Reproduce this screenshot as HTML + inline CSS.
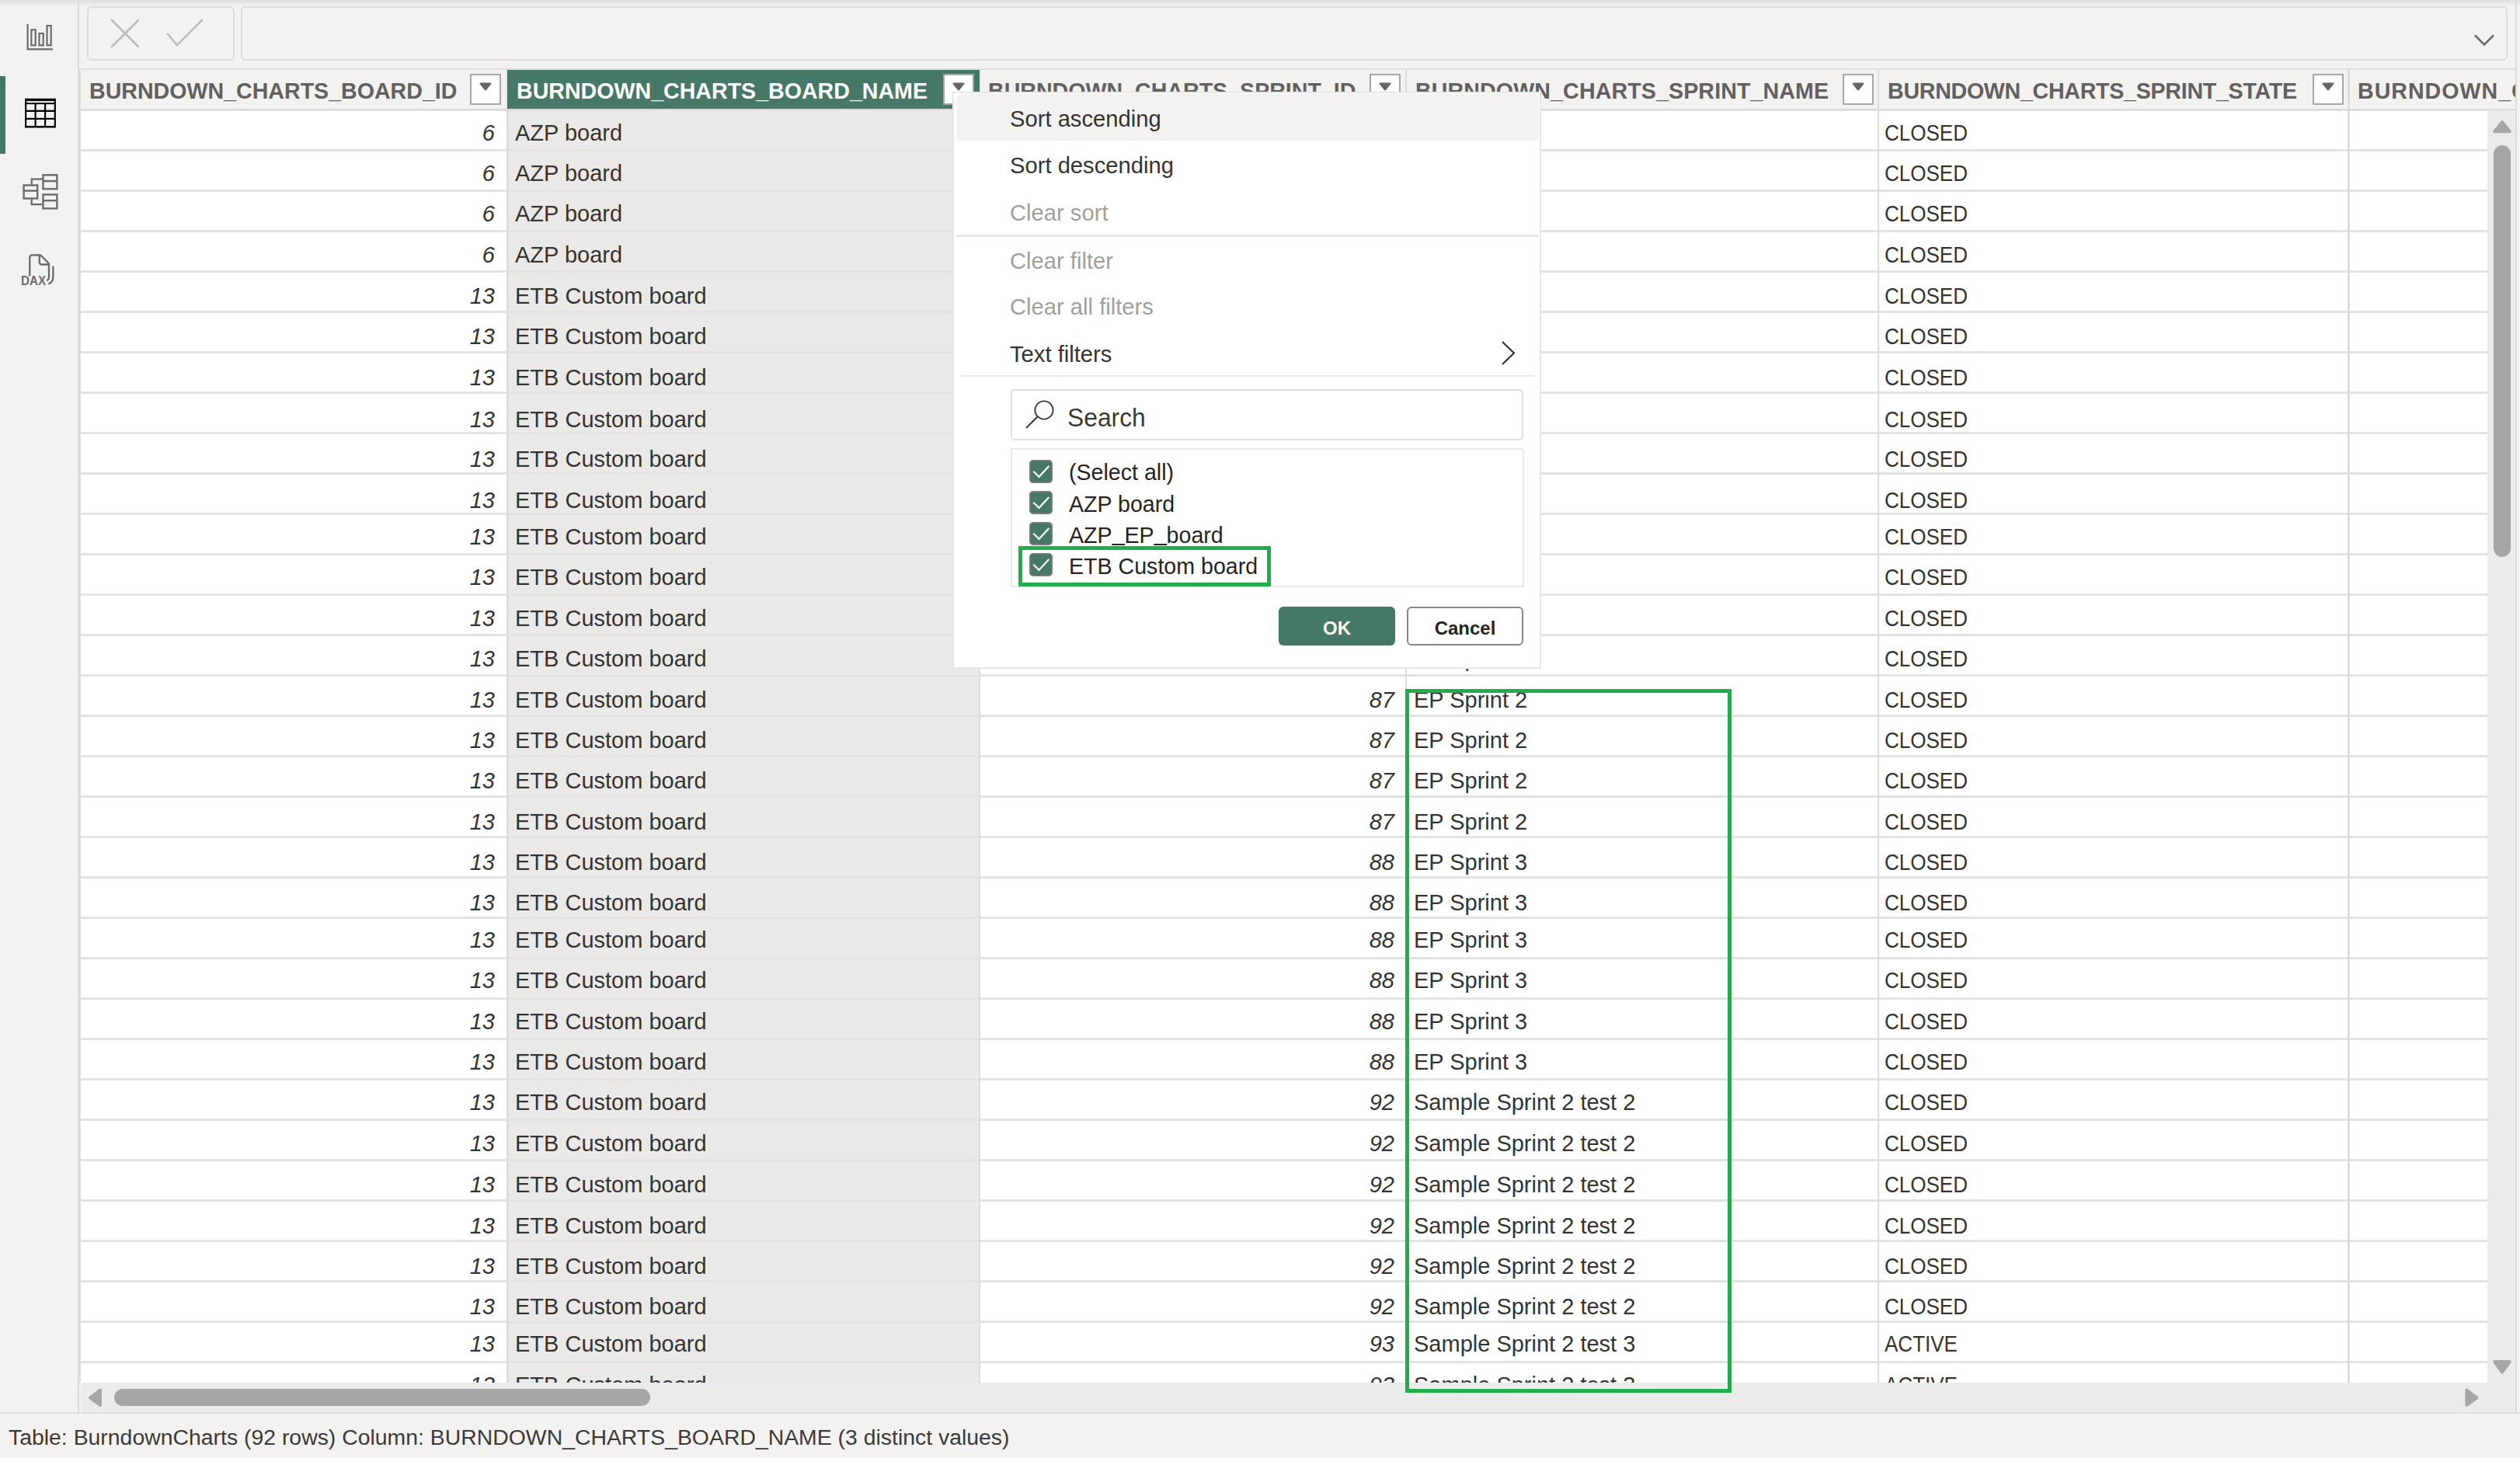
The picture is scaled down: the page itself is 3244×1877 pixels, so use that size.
<!DOCTYPE html><html><head><meta charset="utf-8"><style>
html,body{margin:0;padding:0;}
body{width:3244px;height:1877px;position:relative;overflow:hidden;background:#f3f2f1;font-family:"Liberation Sans",sans-serif;}
.t{position:absolute;white-space:pre;}
svg{position:absolute;overflow:visible;}
</style></head><body>
<div style="position:absolute;left:0px;top:0px;width:3244px;height:8px;background:linear-gradient(#dedcdb,#f3f2f1);"></div>
<div style="position:absolute;left:100px;top:0px;width:2px;height:1819px;background:#dcdad8;"></div>
<div style="position:absolute;left:0px;top:98px;width:7px;height:100px;background:#467867;"></div>
<svg style="left:0;top:0" width="100" height="400">
<g fill="none" stroke="#6b6b6b" stroke-width="2.2">
<path d="M35.6 31 V63.3 H68"/>
<rect x="40.3" y="38.3" width="5.4" height="20"/>
<rect x="50.5" y="43.1" width="5.2" height="15.2"/>
<rect x="60.5" y="33.1" width="5.2" height="25.2"/>
</g>
<rect x="32" y="126.8" width="39.9" height="37.7" fill="#000"/>
<rect x="34.2" y="130.2" width="35.5" height="2" fill="#fff"/>
<g fill="#f3f2f1">
<rect x="34.2" y="134.2" width="10.3" height="7.5"/><rect x="46.7" y="134.2" width="10.3" height="7.5"/><rect x="59.2" y="134.2" width="10.5" height="7.5"/>
<rect x="34.2" y="144" width="10.3" height="7.8"/><rect x="46.7" y="144" width="10.3" height="7.8"/><rect x="59.2" y="144" width="10.5" height="7.8"/>
<rect x="34.2" y="154" width="10.3" height="8"/><rect x="46.7" y="154" width="10.3" height="8"/><rect x="59.2" y="154" width="10.5" height="8"/>
</g>
<g fill="none" stroke="#6b6b6b" stroke-width="2.4">
<rect x="30.6" y="238.5" width="17.6" height="17"/>
<path d="M30.6 245.6 H48.2"/>
<rect x="55.5" y="225.3" width="17.9" height="17.9"/>
<path d="M55.5 233.1 H73.4"/>
<rect x="55.5" y="250.5" width="17.9" height="17.9"/>
<path d="M55.5 258.2 H73.4"/>
<path d="M40.7 237.3 V230.6 H54.3 M40.7 256.7 V263.1 H54.3"/>
</g>
<g fill="none" stroke="#6b6b6b" stroke-width="2.3" stroke-linecap="butt">
<path d="M38.3 355.5 V331.5 Q38.3 328.4 41.5 328.4 H52.1 L63 339.3 V356.5 Q63 360 60.1 361.2"/>
<path d="M50.8 328.4 V337.5 Q50.8 340.5 53.8 340.5 H62.5"/>
<path d="M68.4 342.6 V356.5 Q68.4 363.5 62.4 365.6"/>
</g>
<text x="27.1" y="366.7" font-family="Liberation Sans" font-weight="bold" font-size="17" fill="#6b6b6b" textLength="32" lengthAdjust="spacingAndGlyphs">DAX</text>
</svg>
<div style="position:absolute;left:112px;top:8px;width:190px;height:70px;box-sizing:border-box;border:2px solid #dedcda;border-radius:6px;"></div>
<div style="position:absolute;left:310px;top:8px;width:2918px;height:70px;box-sizing:border-box;border:2px solid #dedcda;border-radius:6px;"></div>
<svg style="left:0;top:0" width="3244" height="90">
<g fill="none" stroke="#bbbbbb" stroke-width="2.6" stroke-linecap="round">
<path d="M144 26 L178 60 M178 26 L144 60"/>
<path d="M216 44 L228 58 L260 26"/>
</g>
<path d="M3186 45.5 L3198 57.5 L3210 45.5" fill="none" stroke="#6b6b6b" stroke-width="2.6"/>
</svg>
<div style="position:absolute;left:102px;top:88px;width:3136px;height:2px;background:#e1dfdd;"></div>
<div style="position:absolute;left:104px;top:142px;width:3098px;height:1638px;background:#fff;"></div>
<div style="position:absolute;left:654px;top:142px;width:606px;height:1638px;background:#ebe9e7;"></div>
<div style="position:absolute;left:104px;top:140px;width:3098px;height:3px;background:#e5e3e1;"></div>
<div style="position:absolute;left:104px;top:192px;width:3098px;height:3px;background:#e5e3e1;"></div>
<div style="position:absolute;left:104px;top:244px;width:3098px;height:3px;background:#e5e3e1;"></div>
<div style="position:absolute;left:104px;top:296px;width:3098px;height:3px;background:#e5e3e1;"></div>
<div style="position:absolute;left:104px;top:348px;width:3098px;height:3px;background:#e5e3e1;"></div>
<div style="position:absolute;left:104px;top:400px;width:3098px;height:3px;background:#e5e3e1;"></div>
<div style="position:absolute;left:104px;top:452px;width:3098px;height:3px;background:#e5e3e1;"></div>
<div style="position:absolute;left:104px;top:504px;width:3098px;height:3px;background:#e5e3e1;"></div>
<div style="position:absolute;left:104px;top:556px;width:3098px;height:3px;background:#e5e3e1;"></div>
<div style="position:absolute;left:104px;top:608px;width:3098px;height:3px;background:#e5e3e1;"></div>
<div style="position:absolute;left:104px;top:660px;width:3098px;height:3px;background:#e5e3e1;"></div>
<div style="position:absolute;left:104px;top:712px;width:3098px;height:3px;background:#e5e3e1;"></div>
<div style="position:absolute;left:104px;top:764px;width:3098px;height:3px;background:#e5e3e1;"></div>
<div style="position:absolute;left:104px;top:816px;width:3098px;height:3px;background:#e5e3e1;"></div>
<div style="position:absolute;left:104px;top:868px;width:3098px;height:3px;background:#e5e3e1;"></div>
<div style="position:absolute;left:104px;top:920px;width:3098px;height:3px;background:#e5e3e1;"></div>
<div style="position:absolute;left:104px;top:972px;width:3098px;height:3px;background:#e5e3e1;"></div>
<div style="position:absolute;left:104px;top:1024px;width:3098px;height:3px;background:#e5e3e1;"></div>
<div style="position:absolute;left:104px;top:1076px;width:3098px;height:3px;background:#e5e3e1;"></div>
<div style="position:absolute;left:104px;top:1128px;width:3098px;height:3px;background:#e5e3e1;"></div>
<div style="position:absolute;left:104px;top:1180px;width:3098px;height:3px;background:#e5e3e1;"></div>
<div style="position:absolute;left:104px;top:1232px;width:3098px;height:3px;background:#e5e3e1;"></div>
<div style="position:absolute;left:104px;top:1284px;width:3098px;height:3px;background:#e5e3e1;"></div>
<div style="position:absolute;left:104px;top:1336px;width:3098px;height:3px;background:#e5e3e1;"></div>
<div style="position:absolute;left:104px;top:1388px;width:3098px;height:3px;background:#e5e3e1;"></div>
<div style="position:absolute;left:104px;top:1440px;width:3098px;height:3px;background:#e5e3e1;"></div>
<div style="position:absolute;left:104px;top:1492px;width:3098px;height:3px;background:#e5e3e1;"></div>
<div style="position:absolute;left:104px;top:1544px;width:3098px;height:3px;background:#e5e3e1;"></div>
<div style="position:absolute;left:104px;top:1596px;width:3098px;height:3px;background:#e5e3e1;"></div>
<div style="position:absolute;left:104px;top:1648px;width:3098px;height:3px;background:#e5e3e1;"></div>
<div style="position:absolute;left:104px;top:1700px;width:3098px;height:3px;background:#e5e3e1;"></div>
<div style="position:absolute;left:104px;top:1752px;width:3098px;height:3px;background:#e5e3e1;"></div>
<div style="position:absolute;left:652px;top:89px;width:3px;height:1691px;background:#dfdddb;"></div>
<div style="position:absolute;left:1260px;top:89px;width:2px;height:1691px;background:#dfdddb;"></div>
<div style="position:absolute;left:1809px;top:89px;width:2px;height:1691px;background:#dfdddb;"></div>
<div style="position:absolute;left:2417px;top:89px;width:2px;height:1691px;background:#dfdddb;"></div>
<div style="position:absolute;left:3022px;top:89px;width:3px;height:1691px;background:#dfdddb;"></div>
<div style="position:absolute;left:102px;top:89px;width:2px;height:1691px;background:#e1dfdd;"></div>
<div style="position:absolute;left:653px;top:90px;width:608px;height:52px;background:#467867;"></div>
<div class="t" style="left:115px;top:101px;font-size:28.6px;line-height:32px;color:#626060;font-weight:bold;font-style:normal;">BURNDOWN_CHARTS_BOARD_ID</div>
<div class="t" style="left:665px;top:101px;font-size:28.6px;line-height:32px;color:#ffffff;font-weight:bold;font-style:normal;">BURNDOWN_CHARTS_BOARD_NAME</div>
<div class="t" style="left:1272px;top:101px;font-size:28.6px;line-height:32px;color:#626060;font-weight:bold;font-style:normal;">BURNDOWN_CHARTS_SPRINT_ID</div>
<div class="t" style="left:1822px;top:101px;font-size:28.6px;line-height:32px;color:#626060;font-weight:bold;font-style:normal;letter-spacing:0.12px;">BURNDOWN_CHARTS_SPRINT_NAME</div>
<div class="t" style="left:2430px;top:101px;font-size:28.6px;line-height:32px;color:#626060;font-weight:bold;font-style:normal;letter-spacing:-0.27px;">BURNDOWN_CHARTS_SPRINT_STATE</div>
<div class="t" style="left:3035px;top:101px;font-size:28.6px;line-height:32px;color:#626060;font-weight:bold;font-style:normal;letter-spacing:1px;">BURNDOWN_CHARTS_SPRINT_ID</div>
<div style="position:absolute;left:605px;top:95px;width:40px;height:40px;box-sizing:border-box;background:#fff;border:2px solid #a6a6a6;"></div>
<svg style="left:605px;top:95px" width="40" height="40"><path d="M12.5 13 Q12 11.5 14 11.5 H26 Q28 11.5 27.5 13 L21 21 Q20 22 19 21 Z" fill="#666"/></svg>
<div style="position:absolute;left:1214px;top:95px;width:40px;height:40px;box-sizing:border-box;background:#fff;border:2px solid #a6a6a6;"></div>
<svg style="left:1214px;top:95px" width="40" height="40"><path d="M12.5 13 Q12 11.5 14 11.5 H26 Q28 11.5 27.5 13 L21 21 Q20 22 19 21 Z" fill="#666"/></svg>
<div style="position:absolute;left:1763px;top:95px;width:40px;height:40px;box-sizing:border-box;background:#fff;border:2px solid #a6a6a6;"></div>
<svg style="left:1763px;top:95px" width="40" height="40"><path d="M12.5 13 Q12 11.5 14 11.5 H26 Q28 11.5 27.5 13 L21 21 Q20 22 19 21 Z" fill="#666"/></svg>
<div style="position:absolute;left:2372px;top:95px;width:40px;height:40px;box-sizing:border-box;background:#fff;border:2px solid #a6a6a6;"></div>
<svg style="left:2372px;top:95px" width="40" height="40"><path d="M12.5 13 Q12 11.5 14 11.5 H26 Q28 11.5 27.5 13 L21 21 Q20 22 19 21 Z" fill="#666"/></svg>
<div style="position:absolute;left:2977px;top:95px;width:40px;height:40px;box-sizing:border-box;background:#fff;border:2px solid #a6a6a6;"></div>
<svg style="left:2977px;top:95px" width="40" height="40"><path d="M12.5 13 Q12 11.5 14 11.5 H26 Q28 11.5 27.5 13 L21 21 Q20 22 19 21 Z" fill="#666"/></svg>
<div style="position:absolute;left:0;top:0;width:3202px;height:1780px;overflow:hidden;">
<div class="t" style="right:2565px;text-align:right;top:155px;font-size:29px;line-height:32px;color:#343332;font-weight:normal;font-style:italic;">6</div>
<div class="t" style="left:663px;top:155px;font-size:29px;line-height:32px;color:#343332;font-weight:normal;font-style:normal;">AZP board</div>
<div class="t" style="left:2426px;top:155px;font-size:29px;line-height:32px;color:#343332;font-weight:normal;font-style:normal;transform:scaleX(0.897);transform-origin:0 0;">CLOSED</div>
<div class="t" style="right:2565px;text-align:right;top:207px;font-size:29px;line-height:32px;color:#343332;font-weight:normal;font-style:italic;">6</div>
<div class="t" style="left:663px;top:207px;font-size:29px;line-height:32px;color:#343332;font-weight:normal;font-style:normal;">AZP board</div>
<div class="t" style="left:2426px;top:207px;font-size:29px;line-height:32px;color:#343332;font-weight:normal;font-style:normal;transform:scaleX(0.897);transform-origin:0 0;">CLOSED</div>
<div class="t" style="right:2565px;text-align:right;top:259px;font-size:29px;line-height:32px;color:#343332;font-weight:normal;font-style:italic;">6</div>
<div class="t" style="left:663px;top:259px;font-size:29px;line-height:32px;color:#343332;font-weight:normal;font-style:normal;">AZP board</div>
<div class="t" style="left:2426px;top:259px;font-size:29px;line-height:32px;color:#343332;font-weight:normal;font-style:normal;transform:scaleX(0.897);transform-origin:0 0;">CLOSED</div>
<div class="t" style="right:2565px;text-align:right;top:312px;font-size:29px;line-height:32px;color:#343332;font-weight:normal;font-style:italic;">6</div>
<div class="t" style="left:663px;top:312px;font-size:29px;line-height:32px;color:#343332;font-weight:normal;font-style:normal;">AZP board</div>
<div class="t" style="left:2426px;top:312px;font-size:29px;line-height:32px;color:#343332;font-weight:normal;font-style:normal;transform:scaleX(0.897);transform-origin:0 0;">CLOSED</div>
<div class="t" style="right:2565px;text-align:right;top:365px;font-size:29px;line-height:32px;color:#343332;font-weight:normal;font-style:italic;">13</div>
<div class="t" style="left:663px;top:365px;font-size:29px;line-height:32px;color:#343332;font-weight:normal;font-style:normal;">ETB Custom board</div>
<div class="t" style="right:1407px;text-align:right;top:365px;font-size:29px;line-height:32px;color:#343332;font-weight:normal;font-style:italic;">87</div>
<div class="t" style="left:1820px;top:365px;font-size:29px;line-height:32px;color:#343332;font-weight:normal;font-style:normal;">EP Sprint 2</div>
<div class="t" style="left:2426px;top:365px;font-size:29px;line-height:32px;color:#343332;font-weight:normal;font-style:normal;transform:scaleX(0.897);transform-origin:0 0;">CLOSED</div>
<div class="t" style="right:2565px;text-align:right;top:417px;font-size:29px;line-height:32px;color:#343332;font-weight:normal;font-style:italic;">13</div>
<div class="t" style="left:663px;top:417px;font-size:29px;line-height:32px;color:#343332;font-weight:normal;font-style:normal;">ETB Custom board</div>
<div class="t" style="right:1407px;text-align:right;top:417px;font-size:29px;line-height:32px;color:#343332;font-weight:normal;font-style:italic;">87</div>
<div class="t" style="left:1820px;top:417px;font-size:29px;line-height:32px;color:#343332;font-weight:normal;font-style:normal;">EP Sprint 2</div>
<div class="t" style="left:2426px;top:417px;font-size:29px;line-height:32px;color:#343332;font-weight:normal;font-style:normal;transform:scaleX(0.897);transform-origin:0 0;">CLOSED</div>
<div class="t" style="right:2565px;text-align:right;top:470px;font-size:29px;line-height:32px;color:#343332;font-weight:normal;font-style:italic;">13</div>
<div class="t" style="left:663px;top:470px;font-size:29px;line-height:32px;color:#343332;font-weight:normal;font-style:normal;">ETB Custom board</div>
<div class="t" style="right:1407px;text-align:right;top:470px;font-size:29px;line-height:32px;color:#343332;font-weight:normal;font-style:italic;">87</div>
<div class="t" style="left:1820px;top:470px;font-size:29px;line-height:32px;color:#343332;font-weight:normal;font-style:normal;">EP Sprint 2</div>
<div class="t" style="left:2426px;top:470px;font-size:29px;line-height:32px;color:#343332;font-weight:normal;font-style:normal;transform:scaleX(0.897);transform-origin:0 0;">CLOSED</div>
<div class="t" style="right:2565px;text-align:right;top:524px;font-size:29px;line-height:32px;color:#343332;font-weight:normal;font-style:italic;">13</div>
<div class="t" style="left:663px;top:524px;font-size:29px;line-height:32px;color:#343332;font-weight:normal;font-style:normal;">ETB Custom board</div>
<div class="t" style="right:1407px;text-align:right;top:524px;font-size:29px;line-height:32px;color:#343332;font-weight:normal;font-style:italic;">87</div>
<div class="t" style="left:1820px;top:524px;font-size:29px;line-height:32px;color:#343332;font-weight:normal;font-style:normal;">EP Sprint 2</div>
<div class="t" style="left:2426px;top:524px;font-size:29px;line-height:32px;color:#343332;font-weight:normal;font-style:normal;transform:scaleX(0.897);transform-origin:0 0;">CLOSED</div>
<div class="t" style="right:2565px;text-align:right;top:575px;font-size:29px;line-height:32px;color:#343332;font-weight:normal;font-style:italic;">13</div>
<div class="t" style="left:663px;top:575px;font-size:29px;line-height:32px;color:#343332;font-weight:normal;font-style:normal;">ETB Custom board</div>
<div class="t" style="right:1407px;text-align:right;top:575px;font-size:29px;line-height:32px;color:#343332;font-weight:normal;font-style:italic;">87</div>
<div class="t" style="left:1820px;top:575px;font-size:29px;line-height:32px;color:#343332;font-weight:normal;font-style:normal;">EP Sprint 2</div>
<div class="t" style="left:2426px;top:575px;font-size:29px;line-height:32px;color:#343332;font-weight:normal;font-style:normal;transform:scaleX(0.897);transform-origin:0 0;">CLOSED</div>
<div class="t" style="right:2565px;text-align:right;top:628px;font-size:29px;line-height:32px;color:#343332;font-weight:normal;font-style:italic;">13</div>
<div class="t" style="left:663px;top:628px;font-size:29px;line-height:32px;color:#343332;font-weight:normal;font-style:normal;">ETB Custom board</div>
<div class="t" style="right:1407px;text-align:right;top:628px;font-size:29px;line-height:32px;color:#343332;font-weight:normal;font-style:italic;">87</div>
<div class="t" style="left:1820px;top:628px;font-size:29px;line-height:32px;color:#343332;font-weight:normal;font-style:normal;">EP Sprint 2</div>
<div class="t" style="left:2426px;top:628px;font-size:29px;line-height:32px;color:#343332;font-weight:normal;font-style:normal;transform:scaleX(0.897);transform-origin:0 0;">CLOSED</div>
<div class="t" style="right:2565px;text-align:right;top:675px;font-size:29px;line-height:32px;color:#343332;font-weight:normal;font-style:italic;">13</div>
<div class="t" style="left:663px;top:675px;font-size:29px;line-height:32px;color:#343332;font-weight:normal;font-style:normal;">ETB Custom board</div>
<div class="t" style="right:1407px;text-align:right;top:675px;font-size:29px;line-height:32px;color:#343332;font-weight:normal;font-style:italic;">87</div>
<div class="t" style="left:1820px;top:675px;font-size:29px;line-height:32px;color:#343332;font-weight:normal;font-style:normal;">EP Sprint 2</div>
<div class="t" style="left:2426px;top:675px;font-size:29px;line-height:32px;color:#343332;font-weight:normal;font-style:normal;transform:scaleX(0.897);transform-origin:0 0;">CLOSED</div>
<div class="t" style="right:2565px;text-align:right;top:727px;font-size:29px;line-height:32px;color:#343332;font-weight:normal;font-style:italic;">13</div>
<div class="t" style="left:663px;top:727px;font-size:29px;line-height:32px;color:#343332;font-weight:normal;font-style:normal;">ETB Custom board</div>
<div class="t" style="right:1407px;text-align:right;top:727px;font-size:29px;line-height:32px;color:#343332;font-weight:normal;font-style:italic;">87</div>
<div class="t" style="left:1820px;top:727px;font-size:29px;line-height:32px;color:#343332;font-weight:normal;font-style:normal;">EP Sprint 2</div>
<div class="t" style="left:2426px;top:727px;font-size:29px;line-height:32px;color:#343332;font-weight:normal;font-style:normal;transform:scaleX(0.897);transform-origin:0 0;">CLOSED</div>
<div class="t" style="right:2565px;text-align:right;top:780px;font-size:29px;line-height:32px;color:#343332;font-weight:normal;font-style:italic;">13</div>
<div class="t" style="left:663px;top:780px;font-size:29px;line-height:32px;color:#343332;font-weight:normal;font-style:normal;">ETB Custom board</div>
<div class="t" style="right:1407px;text-align:right;top:780px;font-size:29px;line-height:32px;color:#343332;font-weight:normal;font-style:italic;">87</div>
<div class="t" style="left:1820px;top:780px;font-size:29px;line-height:32px;color:#343332;font-weight:normal;font-style:normal;">EP Sprint 2</div>
<div class="t" style="left:2426px;top:780px;font-size:29px;line-height:32px;color:#343332;font-weight:normal;font-style:normal;transform:scaleX(0.897);transform-origin:0 0;">CLOSED</div>
<div class="t" style="right:2565px;text-align:right;top:832px;font-size:29px;line-height:32px;color:#343332;font-weight:normal;font-style:italic;">13</div>
<div class="t" style="left:663px;top:832px;font-size:29px;line-height:32px;color:#343332;font-weight:normal;font-style:normal;">ETB Custom board</div>
<div class="t" style="right:1407px;text-align:right;top:832px;font-size:29px;line-height:32px;color:#343332;font-weight:normal;font-style:italic;">87</div>
<div class="t" style="left:1820px;top:832px;font-size:29px;line-height:32px;color:#343332;font-weight:normal;font-style:normal;">EP Sprint 2</div>
<div class="t" style="left:2426px;top:832px;font-size:29px;line-height:32px;color:#343332;font-weight:normal;font-style:normal;transform:scaleX(0.897);transform-origin:0 0;">CLOSED</div>
<div class="t" style="right:2565px;text-align:right;top:885px;font-size:29px;line-height:32px;color:#343332;font-weight:normal;font-style:italic;">13</div>
<div class="t" style="left:663px;top:885px;font-size:29px;line-height:32px;color:#343332;font-weight:normal;font-style:normal;">ETB Custom board</div>
<div class="t" style="right:1407px;text-align:right;top:885px;font-size:29px;line-height:32px;color:#343332;font-weight:normal;font-style:italic;">87</div>
<div class="t" style="left:1820px;top:885px;font-size:29px;line-height:32px;color:#343332;font-weight:normal;font-style:normal;">EP Sprint 2</div>
<div class="t" style="left:2426px;top:885px;font-size:29px;line-height:32px;color:#343332;font-weight:normal;font-style:normal;transform:scaleX(0.897);transform-origin:0 0;">CLOSED</div>
<div class="t" style="right:2565px;text-align:right;top:937px;font-size:29px;line-height:32px;color:#343332;font-weight:normal;font-style:italic;">13</div>
<div class="t" style="left:663px;top:937px;font-size:29px;line-height:32px;color:#343332;font-weight:normal;font-style:normal;">ETB Custom board</div>
<div class="t" style="right:1407px;text-align:right;top:937px;font-size:29px;line-height:32px;color:#343332;font-weight:normal;font-style:italic;">87</div>
<div class="t" style="left:1820px;top:937px;font-size:29px;line-height:32px;color:#343332;font-weight:normal;font-style:normal;">EP Sprint 2</div>
<div class="t" style="left:2426px;top:937px;font-size:29px;line-height:32px;color:#343332;font-weight:normal;font-style:normal;transform:scaleX(0.897);transform-origin:0 0;">CLOSED</div>
<div class="t" style="right:2565px;text-align:right;top:989px;font-size:29px;line-height:32px;color:#343332;font-weight:normal;font-style:italic;">13</div>
<div class="t" style="left:663px;top:989px;font-size:29px;line-height:32px;color:#343332;font-weight:normal;font-style:normal;">ETB Custom board</div>
<div class="t" style="right:1407px;text-align:right;top:989px;font-size:29px;line-height:32px;color:#343332;font-weight:normal;font-style:italic;">87</div>
<div class="t" style="left:1820px;top:989px;font-size:29px;line-height:32px;color:#343332;font-weight:normal;font-style:normal;">EP Sprint 2</div>
<div class="t" style="left:2426px;top:989px;font-size:29px;line-height:32px;color:#343332;font-weight:normal;font-style:normal;transform:scaleX(0.897);transform-origin:0 0;">CLOSED</div>
<div class="t" style="right:2565px;text-align:right;top:1042px;font-size:29px;line-height:32px;color:#343332;font-weight:normal;font-style:italic;">13</div>
<div class="t" style="left:663px;top:1042px;font-size:29px;line-height:32px;color:#343332;font-weight:normal;font-style:normal;">ETB Custom board</div>
<div class="t" style="right:1407px;text-align:right;top:1042px;font-size:29px;line-height:32px;color:#343332;font-weight:normal;font-style:italic;">87</div>
<div class="t" style="left:1820px;top:1042px;font-size:29px;line-height:32px;color:#343332;font-weight:normal;font-style:normal;">EP Sprint 2</div>
<div class="t" style="left:2426px;top:1042px;font-size:29px;line-height:32px;color:#343332;font-weight:normal;font-style:normal;transform:scaleX(0.897);transform-origin:0 0;">CLOSED</div>
<div class="t" style="right:2565px;text-align:right;top:1094px;font-size:29px;line-height:32px;color:#343332;font-weight:normal;font-style:italic;">13</div>
<div class="t" style="left:663px;top:1094px;font-size:29px;line-height:32px;color:#343332;font-weight:normal;font-style:normal;">ETB Custom board</div>
<div class="t" style="right:1407px;text-align:right;top:1094px;font-size:29px;line-height:32px;color:#343332;font-weight:normal;font-style:italic;">88</div>
<div class="t" style="left:1820px;top:1094px;font-size:29px;line-height:32px;color:#343332;font-weight:normal;font-style:normal;">EP Sprint 3</div>
<div class="t" style="left:2426px;top:1094px;font-size:29px;line-height:32px;color:#343332;font-weight:normal;font-style:normal;transform:scaleX(0.897);transform-origin:0 0;">CLOSED</div>
<div class="t" style="right:2565px;text-align:right;top:1146px;font-size:29px;line-height:32px;color:#343332;font-weight:normal;font-style:italic;">13</div>
<div class="t" style="left:663px;top:1146px;font-size:29px;line-height:32px;color:#343332;font-weight:normal;font-style:normal;">ETB Custom board</div>
<div class="t" style="right:1407px;text-align:right;top:1146px;font-size:29px;line-height:32px;color:#343332;font-weight:normal;font-style:italic;">88</div>
<div class="t" style="left:1820px;top:1146px;font-size:29px;line-height:32px;color:#343332;font-weight:normal;font-style:normal;">EP Sprint 3</div>
<div class="t" style="left:2426px;top:1146px;font-size:29px;line-height:32px;color:#343332;font-weight:normal;font-style:normal;transform:scaleX(0.897);transform-origin:0 0;">CLOSED</div>
<div class="t" style="right:2565px;text-align:right;top:1194px;font-size:29px;line-height:32px;color:#343332;font-weight:normal;font-style:italic;">13</div>
<div class="t" style="left:663px;top:1194px;font-size:29px;line-height:32px;color:#343332;font-weight:normal;font-style:normal;">ETB Custom board</div>
<div class="t" style="right:1407px;text-align:right;top:1194px;font-size:29px;line-height:32px;color:#343332;font-weight:normal;font-style:italic;">88</div>
<div class="t" style="left:1820px;top:1194px;font-size:29px;line-height:32px;color:#343332;font-weight:normal;font-style:normal;">EP Sprint 3</div>
<div class="t" style="left:2426px;top:1194px;font-size:29px;line-height:32px;color:#343332;font-weight:normal;font-style:normal;transform:scaleX(0.897);transform-origin:0 0;">CLOSED</div>
<div class="t" style="right:2565px;text-align:right;top:1246px;font-size:29px;line-height:32px;color:#343332;font-weight:normal;font-style:italic;">13</div>
<div class="t" style="left:663px;top:1246px;font-size:29px;line-height:32px;color:#343332;font-weight:normal;font-style:normal;">ETB Custom board</div>
<div class="t" style="right:1407px;text-align:right;top:1246px;font-size:29px;line-height:32px;color:#343332;font-weight:normal;font-style:italic;">88</div>
<div class="t" style="left:1820px;top:1246px;font-size:29px;line-height:32px;color:#343332;font-weight:normal;font-style:normal;">EP Sprint 3</div>
<div class="t" style="left:2426px;top:1246px;font-size:29px;line-height:32px;color:#343332;font-weight:normal;font-style:normal;transform:scaleX(0.897);transform-origin:0 0;">CLOSED</div>
<div class="t" style="right:2565px;text-align:right;top:1299px;font-size:29px;line-height:32px;color:#343332;font-weight:normal;font-style:italic;">13</div>
<div class="t" style="left:663px;top:1299px;font-size:29px;line-height:32px;color:#343332;font-weight:normal;font-style:normal;">ETB Custom board</div>
<div class="t" style="right:1407px;text-align:right;top:1299px;font-size:29px;line-height:32px;color:#343332;font-weight:normal;font-style:italic;">88</div>
<div class="t" style="left:1820px;top:1299px;font-size:29px;line-height:32px;color:#343332;font-weight:normal;font-style:normal;">EP Sprint 3</div>
<div class="t" style="left:2426px;top:1299px;font-size:29px;line-height:32px;color:#343332;font-weight:normal;font-style:normal;transform:scaleX(0.897);transform-origin:0 0;">CLOSED</div>
<div class="t" style="right:2565px;text-align:right;top:1351px;font-size:29px;line-height:32px;color:#343332;font-weight:normal;font-style:italic;">13</div>
<div class="t" style="left:663px;top:1351px;font-size:29px;line-height:32px;color:#343332;font-weight:normal;font-style:normal;">ETB Custom board</div>
<div class="t" style="right:1407px;text-align:right;top:1351px;font-size:29px;line-height:32px;color:#343332;font-weight:normal;font-style:italic;">88</div>
<div class="t" style="left:1820px;top:1351px;font-size:29px;line-height:32px;color:#343332;font-weight:normal;font-style:normal;">EP Sprint 3</div>
<div class="t" style="left:2426px;top:1351px;font-size:29px;line-height:32px;color:#343332;font-weight:normal;font-style:normal;transform:scaleX(0.897);transform-origin:0 0;">CLOSED</div>
<div class="t" style="right:2565px;text-align:right;top:1403px;font-size:29px;line-height:32px;color:#343332;font-weight:normal;font-style:italic;">13</div>
<div class="t" style="left:663px;top:1403px;font-size:29px;line-height:32px;color:#343332;font-weight:normal;font-style:normal;">ETB Custom board</div>
<div class="t" style="right:1407px;text-align:right;top:1403px;font-size:29px;line-height:32px;color:#343332;font-weight:normal;font-style:italic;">92</div>
<div class="t" style="left:1820px;top:1403px;font-size:29px;line-height:32px;color:#343332;font-weight:normal;font-style:normal;">Sample Sprint 2 test 2</div>
<div class="t" style="left:2426px;top:1403px;font-size:29px;line-height:32px;color:#343332;font-weight:normal;font-style:normal;transform:scaleX(0.897);transform-origin:0 0;">CLOSED</div>
<div class="t" style="right:2565px;text-align:right;top:1456px;font-size:29px;line-height:32px;color:#343332;font-weight:normal;font-style:italic;">13</div>
<div class="t" style="left:663px;top:1456px;font-size:29px;line-height:32px;color:#343332;font-weight:normal;font-style:normal;">ETB Custom board</div>
<div class="t" style="right:1407px;text-align:right;top:1456px;font-size:29px;line-height:32px;color:#343332;font-weight:normal;font-style:italic;">92</div>
<div class="t" style="left:1820px;top:1456px;font-size:29px;line-height:32px;color:#343332;font-weight:normal;font-style:normal;">Sample Sprint 2 test 2</div>
<div class="t" style="left:2426px;top:1456px;font-size:29px;line-height:32px;color:#343332;font-weight:normal;font-style:normal;transform:scaleX(0.897);transform-origin:0 0;">CLOSED</div>
<div class="t" style="right:2565px;text-align:right;top:1509px;font-size:29px;line-height:32px;color:#343332;font-weight:normal;font-style:italic;">13</div>
<div class="t" style="left:663px;top:1509px;font-size:29px;line-height:32px;color:#343332;font-weight:normal;font-style:normal;">ETB Custom board</div>
<div class="t" style="right:1407px;text-align:right;top:1509px;font-size:29px;line-height:32px;color:#343332;font-weight:normal;font-style:italic;">92</div>
<div class="t" style="left:1820px;top:1509px;font-size:29px;line-height:32px;color:#343332;font-weight:normal;font-style:normal;">Sample Sprint 2 test 2</div>
<div class="t" style="left:2426px;top:1509px;font-size:29px;line-height:32px;color:#343332;font-weight:normal;font-style:normal;transform:scaleX(0.897);transform-origin:0 0;">CLOSED</div>
<div class="t" style="right:2565px;text-align:right;top:1562px;font-size:29px;line-height:32px;color:#343332;font-weight:normal;font-style:italic;">13</div>
<div class="t" style="left:663px;top:1562px;font-size:29px;line-height:32px;color:#343332;font-weight:normal;font-style:normal;">ETB Custom board</div>
<div class="t" style="right:1407px;text-align:right;top:1562px;font-size:29px;line-height:32px;color:#343332;font-weight:normal;font-style:italic;">92</div>
<div class="t" style="left:1820px;top:1562px;font-size:29px;line-height:32px;color:#343332;font-weight:normal;font-style:normal;">Sample Sprint 2 test 2</div>
<div class="t" style="left:2426px;top:1562px;font-size:29px;line-height:32px;color:#343332;font-weight:normal;font-style:normal;transform:scaleX(0.897);transform-origin:0 0;">CLOSED</div>
<div class="t" style="right:2565px;text-align:right;top:1614px;font-size:29px;line-height:32px;color:#343332;font-weight:normal;font-style:italic;">13</div>
<div class="t" style="left:663px;top:1614px;font-size:29px;line-height:32px;color:#343332;font-weight:normal;font-style:normal;">ETB Custom board</div>
<div class="t" style="right:1407px;text-align:right;top:1614px;font-size:29px;line-height:32px;color:#343332;font-weight:normal;font-style:italic;">92</div>
<div class="t" style="left:1820px;top:1614px;font-size:29px;line-height:32px;color:#343332;font-weight:normal;font-style:normal;">Sample Sprint 2 test 2</div>
<div class="t" style="left:2426px;top:1614px;font-size:29px;line-height:32px;color:#343332;font-weight:normal;font-style:normal;transform:scaleX(0.897);transform-origin:0 0;">CLOSED</div>
<div class="t" style="right:2565px;text-align:right;top:1666px;font-size:29px;line-height:32px;color:#343332;font-weight:normal;font-style:italic;">13</div>
<div class="t" style="left:663px;top:1666px;font-size:29px;line-height:32px;color:#343332;font-weight:normal;font-style:normal;">ETB Custom board</div>
<div class="t" style="right:1407px;text-align:right;top:1666px;font-size:29px;line-height:32px;color:#343332;font-weight:normal;font-style:italic;">92</div>
<div class="t" style="left:1820px;top:1666px;font-size:29px;line-height:32px;color:#343332;font-weight:normal;font-style:normal;">Sample Sprint 2 test 2</div>
<div class="t" style="left:2426px;top:1666px;font-size:29px;line-height:32px;color:#343332;font-weight:normal;font-style:normal;transform:scaleX(0.897);transform-origin:0 0;">CLOSED</div>
<div class="t" style="right:2565px;text-align:right;top:1714px;font-size:29px;line-height:32px;color:#343332;font-weight:normal;font-style:italic;">13</div>
<div class="t" style="left:663px;top:1714px;font-size:29px;line-height:32px;color:#343332;font-weight:normal;font-style:normal;">ETB Custom board</div>
<div class="t" style="right:1407px;text-align:right;top:1714px;font-size:29px;line-height:32px;color:#343332;font-weight:normal;font-style:italic;">93</div>
<div class="t" style="left:1820px;top:1714px;font-size:29px;line-height:32px;color:#343332;font-weight:normal;font-style:normal;">Sample Sprint 2 test 3</div>
<div class="t" style="left:2426px;top:1714px;font-size:29px;line-height:32px;color:#343332;font-weight:normal;font-style:normal;transform:scaleX(0.897);transform-origin:0 0;">ACTIVE</div>
<div class="t" style="right:2565px;text-align:right;top:1767px;font-size:29px;line-height:32px;color:#343332;font-weight:normal;font-style:italic;">13</div>
<div class="t" style="left:663px;top:1767px;font-size:29px;line-height:32px;color:#343332;font-weight:normal;font-style:normal;">ETB Custom board</div>
<div class="t" style="right:1407px;text-align:right;top:1767px;font-size:29px;line-height:32px;color:#343332;font-weight:normal;font-style:italic;">93</div>
<div class="t" style="left:1820px;top:1767px;font-size:29px;line-height:32px;color:#343332;font-weight:normal;font-style:normal;">Sample Sprint 2 test 3</div>
<div class="t" style="left:2426px;top:1767px;font-size:29px;line-height:32px;color:#343332;font-weight:normal;font-style:normal;transform:scaleX(0.897);transform-origin:0 0;">ACTIVE</div>
</div>
<div style="position:absolute;left:3202px;top:142px;width:36px;height:1638px;background:#ebebeb;"></div>
<div style="position:absolute;left:3210px;top:187px;width:22px;height:530px;background:#a6a6a6;border-radius:11px;"></div>
<svg style="left:0;top:0" width="3244" height="1877">
<g fill="#a6a6a6" stroke="#a6a6a6" stroke-width="4" stroke-linejoin="round">
<path d="M3221 157 L3230.8 169.3 H3211.3 Z"/>
<path d="M3221 1766.5 L3230.8 1753 H3211.2 Z"/>
</g></svg>
<div style="position:absolute;left:104px;top:1780px;width:3134px;height:39px;background:#ebebeb;"></div>
<svg style="left:0;top:0" width="3244" height="1877"><g fill="#a6a6a6" stroke="#a6a6a6" stroke-width="4" stroke-linejoin="round"><path d="M116 1799.3 L129 1789.6 V1809 Z"/><path d="M3188.5 1799.3 L3175.4 1789.6 V1809 Z"/></g></svg>
<div style="position:absolute;left:147px;top:1788px;width:690px;height:22px;background:#a6a6a6;border-radius:11px;"></div>
<div style="position:absolute;left:3238px;top:88px;width:6px;height:56px;background:#f3f2f1;"></div>
<div style="position:absolute;left:102px;top:140px;width:3136px;height:2px;background:#dcdad8;"></div>
<div style="position:absolute;left:3238px;top:0px;width:2px;height:1819px;background:#dedcda;"></div>
<div style="position:absolute;left:0px;top:1818px;width:3244px;height:2px;background:#e1dfdd;"></div>
<div class="t" style="left:11px;top:1834px;font-size:28.4px;line-height:32px;color:#3b3a39;font-weight:normal;font-style:normal;">Table: BurndownCharts (92 rows) Column: BURNDOWN_CHARTS_BOARD_NAME (3 distinct values)</div>
<div style="position:absolute;left:1809px;top:887px;width:420px;height:906px;box-sizing:border-box;border:5px solid #21ad4b;"></div>
<div style="position:absolute;left:1226px;top:118px;width:758px;height:743px;box-sizing:border-box;background:#fff;border:2px solid #e8e6e4;"></div>
<div style="position:absolute;left:1231px;top:121px;width:750px;height:60px;background:#f3f2f1;border-radius:7px 7px 0 0;"></div>
<div class="t" style="left:1300px;top:137px;font-size:29.2px;line-height:32px;color:#343332;font-weight:normal;font-style:normal;">Sort ascending</div>
<div class="t" style="left:1300px;top:197px;font-size:29.2px;line-height:32px;color:#343332;font-weight:normal;font-style:normal;">Sort descending</div>
<div class="t" style="left:1300px;top:258px;font-size:29.2px;line-height:32px;color:#a19f9d;font-weight:normal;font-style:normal;">Clear sort</div>
<div style="position:absolute;left:1231px;top:302px;width:750px;height:3px;background:#e8e6e4;"></div>
<div class="t" style="left:1300px;top:320px;font-size:29.2px;line-height:32px;color:#a19f9d;font-weight:normal;font-style:normal;">Clear filter</div>
<div class="t" style="left:1300px;top:379px;font-size:29.2px;line-height:32px;color:#a19f9d;font-weight:normal;font-style:normal;">Clear all filters</div>
<div class="t" style="left:1300px;top:440px;font-size:29.2px;line-height:32px;color:#343332;font-weight:normal;font-style:normal;">Text filters</div>
<svg style="left:0;top:0" width="3244" height="1877"><path d="M1934 440 L1949 454.5 L1934 469" fill="none" stroke="#323130" stroke-width="2.2"/></svg>
<div style="position:absolute;left:1236px;top:483px;width:739px;height:2px;background:#eceae8;"></div>
<div style="position:absolute;left:1301px;top:501px;width:660px;height:66px;box-sizing:border-box;border:2px solid #e1dfdd;border-radius:5px;"></div>
<svg style="left:0;top:0" width="3244" height="1877"><circle cx="1344" cy="528" r="11.6" fill="none" stroke="#3b3a39" stroke-width="1.9"/><path d="M1335.5 536.5 L1321.5 550.5" stroke="#3b3a39" stroke-width="2" stroke-linecap="round"/></svg>
<div class="t" style="left:1374px;top:518px;font-size:34px;line-height:38px;color:#3b3a39;font-weight:normal;font-style:normal;transform:scaleX(0.935);transform-origin:0 0;">Search</div>
<div style="position:absolute;left:1301px;top:577px;width:661px;height:179px;box-sizing:border-box;border:2px solid #ebe9e7;"></div>
<div style="position:absolute;left:1325px;top:592px;width:30px;height:30px;box-sizing:border-box;background:#467867;border:2px solid #7a7a7a;border-radius:5px;"></div>
<svg style="left:1325px;top:592px" width="30" height="30"><path d="M5.3 14.8 L12.5 21.9 L25.3 8" fill="none" stroke="#fff" stroke-width="2.2"/></svg>
<div class="t" style="left:1376px;top:592px;font-size:28.6px;line-height:32px;color:#252423;font-weight:normal;font-style:normal;">(Select all)</div>
<div style="position:absolute;left:1325px;top:632px;width:30px;height:30px;box-sizing:border-box;background:#467867;border:2px solid #7a7a7a;border-radius:5px;"></div>
<svg style="left:1325px;top:632px" width="30" height="30"><path d="M5.3 14.8 L12.5 21.9 L25.3 8" fill="none" stroke="#fff" stroke-width="2.2"/></svg>
<div class="t" style="left:1376px;top:633px;font-size:28.6px;line-height:32px;color:#252423;font-weight:normal;font-style:normal;">AZP board</div>
<div style="position:absolute;left:1325px;top:672px;width:30px;height:30px;box-sizing:border-box;background:#467867;border:2px solid #7a7a7a;border-radius:5px;"></div>
<svg style="left:1325px;top:672px" width="30" height="30"><path d="M5.3 14.8 L12.5 21.9 L25.3 8" fill="none" stroke="#fff" stroke-width="2.2"/></svg>
<div class="t" style="left:1376px;top:673px;font-size:28.6px;line-height:32px;color:#252423;font-weight:normal;font-style:normal;">AZP<span style="position:relative;top:-3px">_</span>EP<span style="position:relative;top:-3px">_</span>board</div>
<div style="position:absolute;left:1325px;top:712px;width:30px;height:30px;box-sizing:border-box;background:#467867;border:2px solid #7a7a7a;border-radius:5px;"></div>
<svg style="left:1325px;top:712px" width="30" height="30"><path d="M5.3 14.8 L12.5 21.9 L25.3 8" fill="none" stroke="#fff" stroke-width="2.2"/></svg>
<div class="t" style="left:1376px;top:713px;font-size:28.6px;line-height:32px;color:#252423;font-weight:normal;font-style:normal;">ETB Custom board</div>
<div style="position:absolute;left:1311px;top:703px;width:325px;height:52px;box-sizing:border-box;border:5px solid #21ad4b;"></div>
<div style="position:absolute;left:1646px;top:781px;width:150px;height:50px;background:#467867;border-radius:6px;"></div>
<div class="t" style="left:1646px;width:150px;text-align:center;top:795px;font-size:24px;line-height:28px;color:#fff;font-weight:bold;">OK</div>
<div style="position:absolute;left:1811px;top:781px;width:150px;height:50px;box-sizing:border-box;background:#fff;border:2px solid #8a8886;border-radius:6px;"></div>
<div class="t" style="left:1811px;width:150px;text-align:center;top:795px;font-size:24px;line-height:28px;color:#252423;font-weight:bold;">Cancel</div>
</body></html>
